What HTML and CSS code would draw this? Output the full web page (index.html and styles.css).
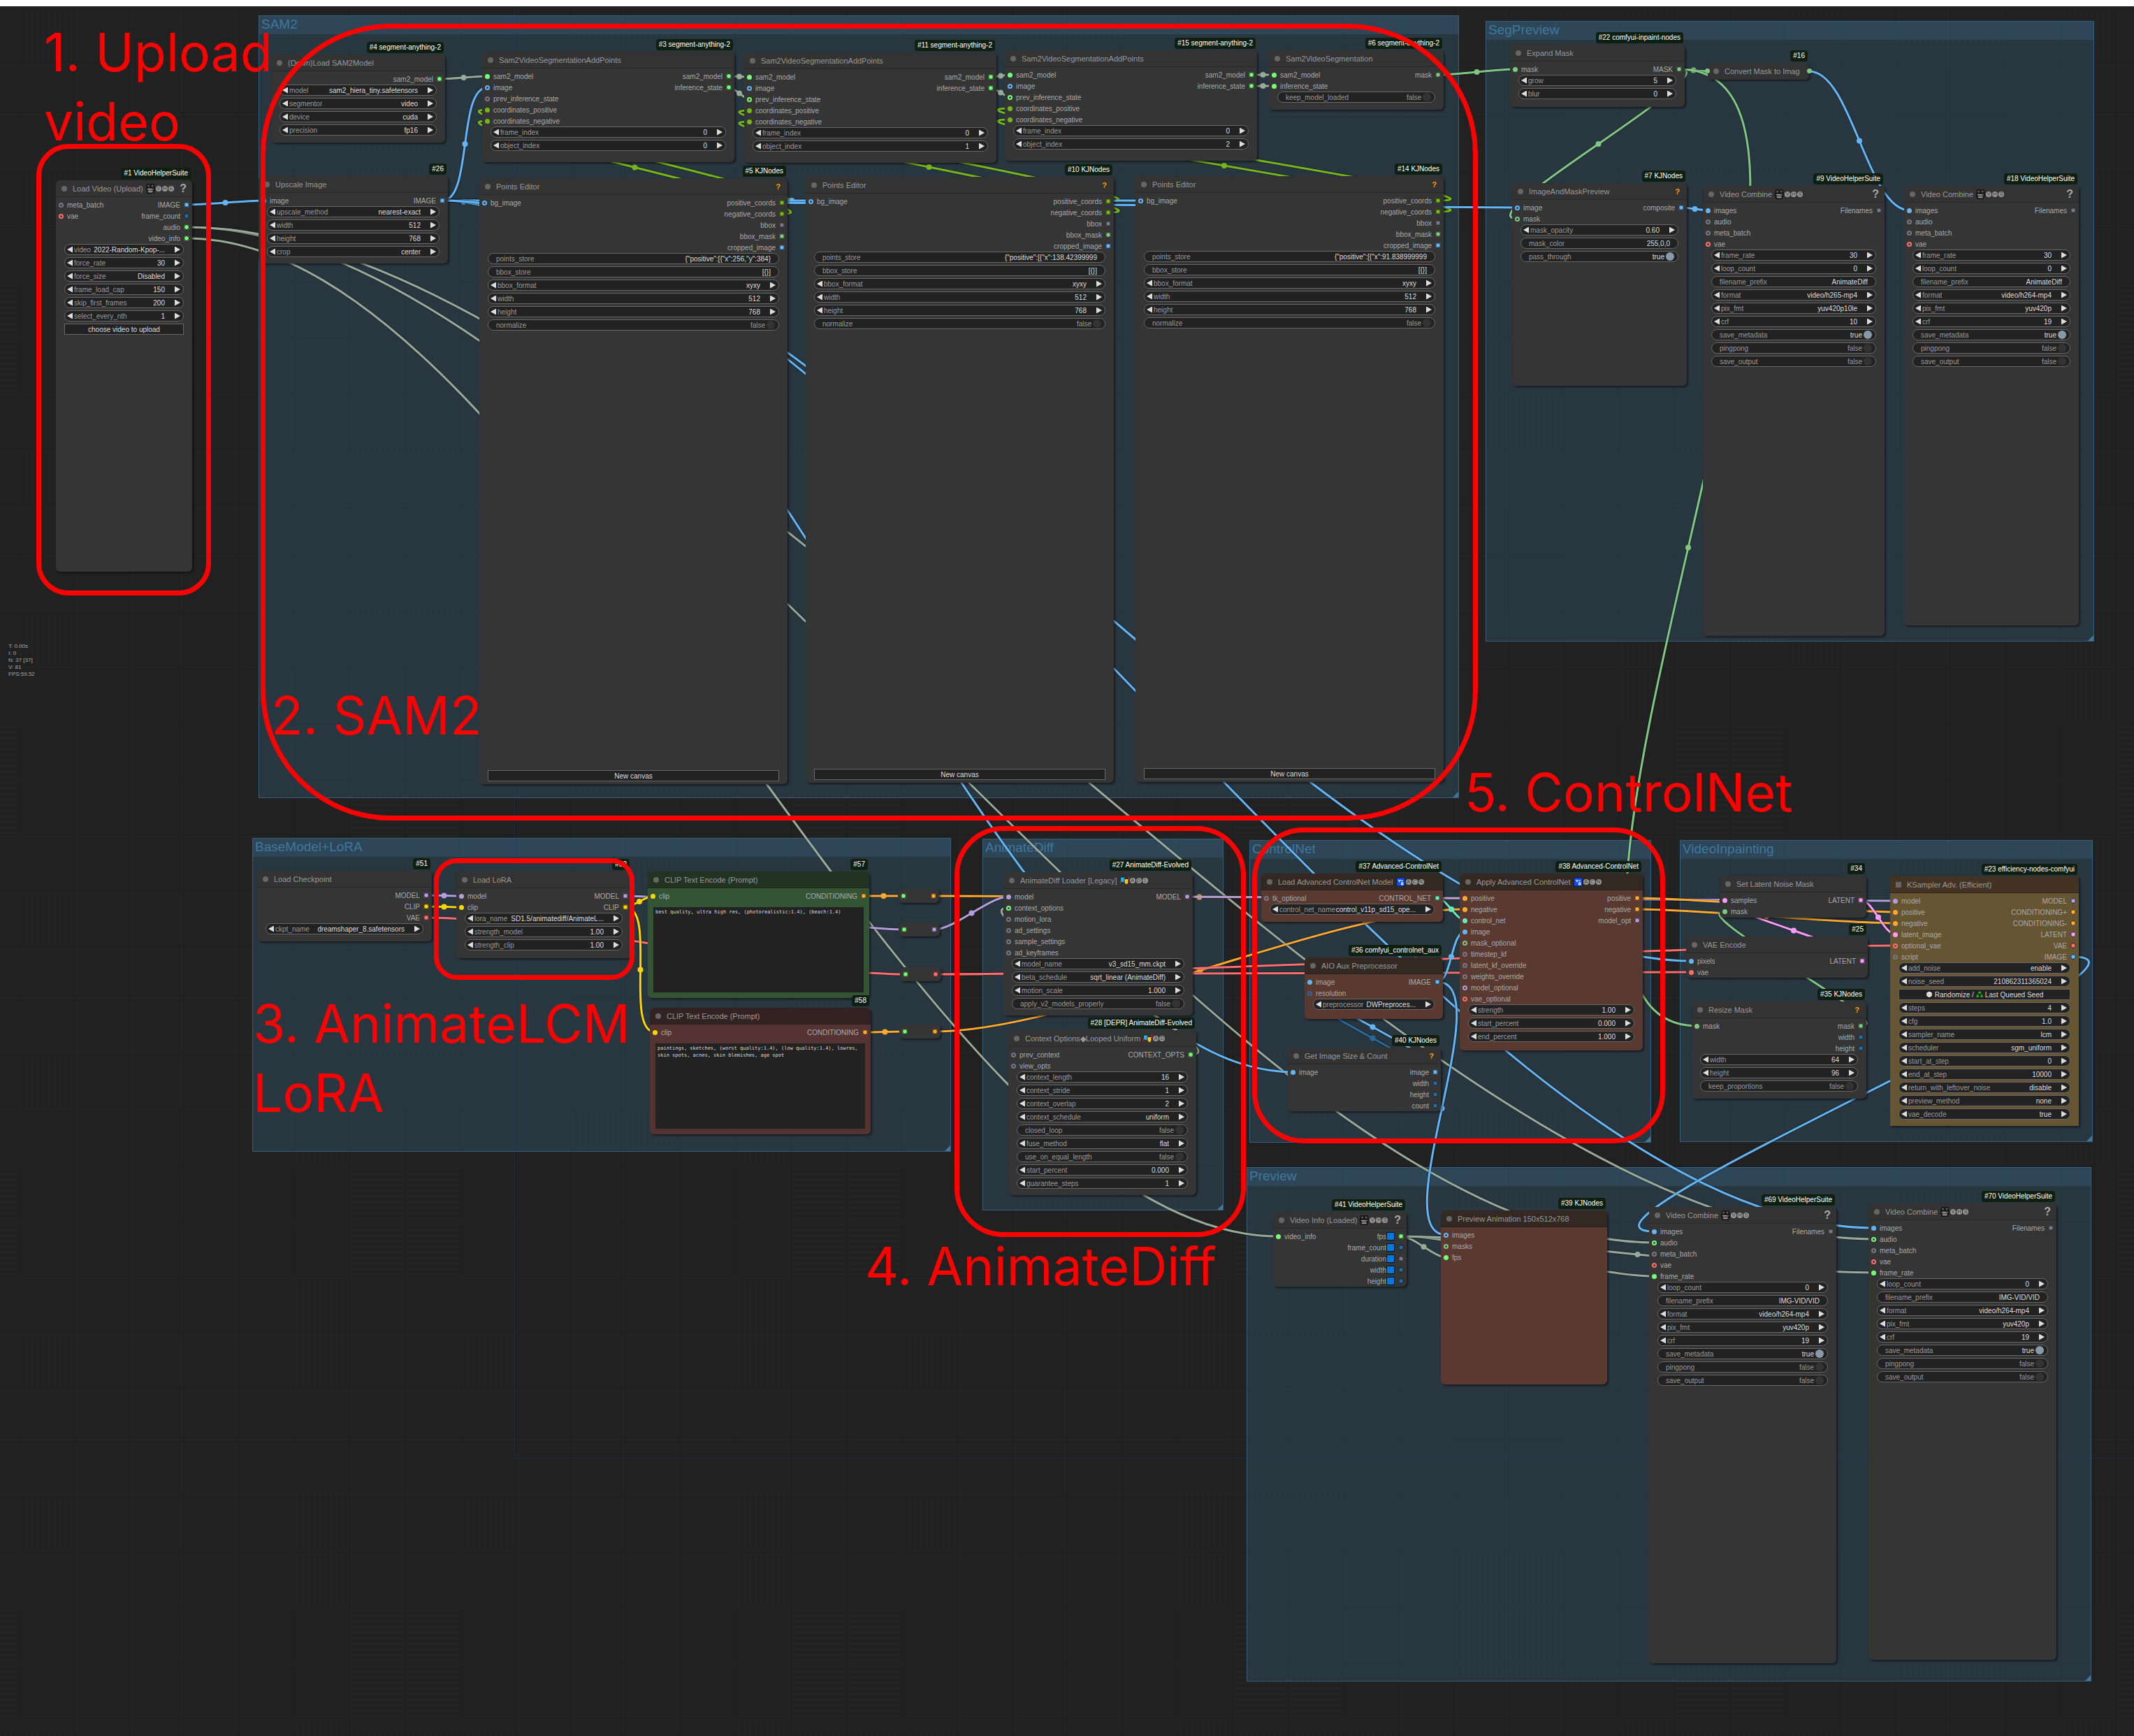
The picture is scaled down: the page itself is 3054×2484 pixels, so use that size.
FILE: index.html
```html
<!DOCTYPE html>
<html lang="en">
<head>
<meta charset="utf-8">
<meta name="viewport" content="width=device-width, initial-scale=1">
<title>SAM2 video inpainting workflow</title>
<link rel="stylesheet" href="styles.css">
</head>
<body>
<svg class="sprites" aria-hidden="true">
  <symbol id="icon-camera" viewBox="0 0 12 13">
    <circle cx="3.4" cy="2.800" r="2.300" fill="#555" stroke="#0c0c0c" stroke-width="1.200"/>
    <circle cx="8.400" cy="2.800" r="2.300" fill="#555" stroke="#0c0c0c" stroke-width="1.200"/>
    <path d="M.6 5.400h10.600v3.200h-1.400v3.800H1.800V8.600H.6z" fill="#5c5c5c" stroke="#0c0c0c" stroke-width="1.200"/>
    <path d="M2.500 7h5M2.800 10.500h5.500" stroke="#aaa" stroke-width="1"/>
    <circle cx="8.400" cy="8.600" r=".9" fill="#a33"/>
  </symbol>
  <symbol id="icon-masks" viewBox="0 0 13 12">
    <path d="M.5 1h6.500v4.500q0 3.500-3 3.500T.5 5.500z" fill="#1fb4ee" stroke="#111" stroke-width=".8"/>
    <path d="M6 3.500h6v4.500q0 3.500-3 3.500T6 8z" fill="#fbc02d" stroke="#111" stroke-width=".8"/>
    <path d="M.5 6v4M12.500 .5v4" stroke="#d22" stroke-width="1.200"/>
  </symbol>
  <symbol id="icon-passport" viewBox="0 0 12 12">
    <rect x=".5" y=".5" width="11" height="11" fill="#0a4fff" stroke="#0a1a55"/>
    <path d="M3 3l1.500 2.500L6 3M7 4.500h2M6.500 7h3M7 7v2.500h2V7" fill="none" stroke="#fff" stroke-width="1.100"/>
  </symbol>
  <symbol id="icon-dice" viewBox="0 0 12 12">
    <path d="M6 1l4.500 2v5.500L6 11 1.500 8.500V3z" fill="#f2f2f2"/>
    <path d="M1.500 3L6 5.200 10.500 3M6 5.200V11" fill="none" stroke="#aaa" stroke-width=".6"/>
    <circle cx="4" cy="7" r=".6" fill="#555"/><circle cx="8.200" cy="6.500" r=".6" fill="#555"/>
  </symbol>
  <symbol id="icon-recycle" viewBox="0 0 12 12">
    <path d="M4 4.500L6 1.500l2 3M9 6l1.500 3.500H7.500M5 9.500H1.500L3.200 6" fill="none" stroke="#16c60c" stroke-width="2"/>
  </symbol>
</svg>

<main class="canvas">
  <section class="group group-sam2"><h2>SAM2</h2></section>
  <section class="group group-segpreview"><h2>SegPreview</h2></section>
  <section class="group group-base"><h2>BaseModel+LoRA</h2></section>
  <section class="group group-animatediff"><h2>AnimateDiff</h2></section>
  <section class="group group-controlnet"><h2>ControlNet</h2></section>
  <section class="group group-inpainting"><h2>VideoInpainting</h2></section>
  <section class="group group-preview"><h2>Preview</h2></section>

  <svg class="links" id="links" aria-hidden="true"></svg>
  <div id="nodes"></div>

  <div class="stats">T: 0.00s<br>I: 0<br>N: 37 [37]<br>V: 81<br>FPS:59.52</div>

  <div class="mark mark-upload"></div>
  <div class="mark mark-sam2"></div>
  <div class="mark mark-lora"></div>
  <div class="mark mark-animatediff"></div>
  <div class="mark mark-controlnet"></div>
  <p class="note note-upload">1. Upload<br>video</p>
  <p class="note note-sam2">2. SAM2</p>
  <p class="note note-lora">3. AnimateLCM<br>LoRA</p>
  <p class="note note-animatediff">4. AnimateDiff</p>
  <p class="note note-controlnet">5. ControlNet</p>
</main>
<script src="workflow.js"></script>
</body>
</html>
```

FILE: styles.css
```css
* { box-sizing: border-box; }

body {
  margin: 0;
  background: #222;
  font-family: "Liberation Sans", Arial, sans-serif;
}

.sprites { position: absolute; width: 0; height: 0; }

.canvas {
  position: relative;
  min-height: 100vh;
  overflow: hidden;
  background:
    linear-gradient(#fff, #fff) 0 0 / 100% 9px no-repeat,
    linear-gradient(#1f2b44, #1f2b44) 736px 0 / 1px 2086px no-repeat,
    linear-gradient(#1f2b44, #1f2b44) 736px 2086px / 100% 1px no-repeat,
    linear-gradient(#1c1c1c 1px, transparent 1px) 0 9px / 79px 79px,
    linear-gradient(90deg, #1c1c1c 1px, transparent 1px) 26px 0 / 79px 79px,
    repeating-linear-gradient(#1f1f1f 0 1px, transparent 1px 8px) 0 9px / 79px 79px,
    repeating-linear-gradient(90deg, #1f1f1f 0 1px, transparent 1px 8px) 26px 0 / 79px 79px,
    #222;
}

/* Groups */
.group {
  position: absolute;
  background: rgba(63, 120, 158, .25);
  border: 1px solid rgba(63, 120, 158, .6);
}
.group::after {
  content: "";
  position: absolute;
  right: 0;
  bottom: 0;
  width: 8px;
  height: 8px;
  background: #3f789e;
  clip-path: polygon(100% 0, 100% 100%, 0 100%);
}
.group h2 {
  margin: 0;
  padding: 0 3px;
  height: 26px;
  background: rgba(63, 120, 158, .25);
  color: #3f789e;
  font-size: 19px;
  font-weight: 400;
  line-height: 24px;
}
.group-sam2 { left: 370px; top: 22px; width: 1718px; height: 1120px; }
.group-segpreview { left: 2126px; top: 30px; width: 871px; height: 888px; }
.group-base { left: 361px; top: 1199px; width: 1000px; height: 449px; }
.group-animatediff { left: 1406px; top: 1200px; width: 345px; height: 532px; }
.group-controlnet { left: 1788px; top: 1202px; width: 575px; height: 433px; }
.group-inpainting { left: 2404px; top: 1202px; width: 591px; height: 432px; }
.group-preview { left: 1784px; top: 1670px; width: 1209px; height: 736px; }

/* Links */
.links { position: absolute; inset: 0; width: 100%; height: 100%; }
.links path { fill: none; stroke-width: 3px; }
.links .shade { stroke: rgba(0, 0, 0, .3); stroke-width: 5px; }

/* Nodes */
.node {
  position: absolute;
  display: flex;
  flex-direction: column;
  background: #353535;
  border-radius: 6px;
  box-shadow: 2px 2px 3px rgba(0, 0, 0, .5);
  color: #aaa;
  font-size: 10px;
}
.badge {
  position: absolute;
  right: 2px;
  bottom: 100%;
  margin-bottom: 2px;
  padding: 0 4px;
  height: 16px;
  border-radius: 4px;
  background: #0f1f0f;
  color: #fff;
  font-size: 10px;
  line-height: 16px;
  white-space: nowrap;
}
.title {
  display: flex;
  align-items: center;
  gap: 4px;
  flex: none;
  height: 24px;
  padding: 0 8px;
  border-bottom: 1px solid rgba(0, 0, 0, .2);
  border-radius: 6px 6px 0 0;
  background: #333;
  color: #999;
}
.title::before {
  content: "";
  flex: none;
  width: 8px;
  height: 8px;
  margin-right: 4px;
  border-radius: 50%;
  background: #666;
}
.title h3 { margin: 0; font-size: 11px; font-weight: 400; line-height: 24px; white-space: nowrap; }
.tags { display: flex; align-items: center; }
.icon { width: 13px; height: 14px; }
.tag {
  width: 8px;
  height: 8px;
  margin-left: 1px;
  border-radius: 50%;
  background: #999;
  color: #333;
  font-size: 7px;
  line-height: 8px;
  text-align: center;
}
.help { margin-left: auto; padding: 0 2px; border: 0; background: none; color: #f90; font: bold 11px "Liberation Sans", Arial, sans-serif; }
.help-vhs { padding: 0; color: #aaa; font-size: 16px; }

.slots { display: flex; justify-content: space-between; padding-top: 3px; }
.slots ul { margin: 0; padding: 0; list-style: none; }
.slots li { display: flex; align-items: center; gap: 5px; height: 16px; padding: 0 4px; white-space: nowrap; }
.outputs li { flex-direction: row-reverse; }
.dot { flex: none; width: 7px; height: 7px; border-radius: 50%; background: var(--c); }
.outputs .dot, .reroute .dot { outline: 1px solid #111; outline-offset: -1px; width: 8px; height: 8px; }
.optional .dot { background: none; border: 2px solid var(--c); }
.swatch { width: 10px; height: 10px; margin-right: 2px; background: #0078d7; outline: 1px solid #111; }
.has-swatch li { gap: 4px; }
.has-swatch .name { margin-right: -3px; }

.widget {
  display: flex;
  align-items: center;
  flex: none;
  height: 16px;
  margin: 0 12px 3px;
  border: 1px solid #666;
  border-radius: 8px;
  background: #222;
  color: #999;
}
.widget label { white-space: nowrap; }
.widget input, .widget select {
  flex: 1;
  min-width: 0;
  width: 0;
  height: 14px;
  margin: 0;
  padding: 0;
  border: 0;
  outline: 0;
  appearance: none;
  background: none;
  color: #ddd;
  font: 10px "Liberation Sans", Arial, sans-serif;
  text-align: right;
  text-align-last: right;
}
.step { flex: none; width: 8px; height: 9px; padding: 0; border: 0; background: #ddd; }
.prev { margin: 0 2px 0 3px; clip-path: polygon(100% 0, 100% 100%, 0 50%); }
.next { margin: 0 4px 0 14px; clip-path: polygon(0 0, 100% 50%, 0 100%); }
.text, .toggle { padding: 0 11px; }
.toggle { padding-right: 5px; }
.widget .state { margin-left: auto; }
.widget input[type="checkbox"] { flex: none; width: 12px; height: 12px; margin-left: 2px; border-radius: 50%; background: #333; }
.widget input[type="checkbox"]:checked { background: #89a; }
.toggle:has(:checked) .state { color: #ddd; }
.action {
  display: flex;
  align-items: center;
  justify-content: center;
  gap: 3px;
  flex: none;
  height: 16px;
  margin: 0 12px 3px;
  padding: 0;
  border: 1px solid #666;
  background: #222;
  color: #ddd;
  font: 10px "Liberation Sans", Arial, sans-serif;
}
.action .icon { width: 10px; height: 10px; }
.action-bottom { margin-top: auto; margin-bottom: 4px; }
.prompt {
  flex: 1;
  margin: 8px;
  padding: 2px 3px;
  border: 0;
  resize: none;
  background: #222;
  color: #ddd;
  font: 7px/10px "DejaVu Sans Mono", monospace;
}

.green { background: #353; }
.green .title { background: #232; }
.red { background: #533; }
.red .title { background: #322; }
.brown { background: #593930; }
.brown .title { background: #332922; }
.gold { background: #653; border-radius: 0; }
.gold .title { background: #432; border-radius: 0; }
.gold .title::before { border-radius: 0; }

.reroute {
  position: absolute;
  display: flex;
  align-items: center;
  justify-content: space-between;
  width: 59px;
  height: 20px;
  padding: 0 4px;
  border-radius: 6px;
  background: #353535;
  box-shadow: 2px 2px 3px rgba(0, 0, 0, .5);
}
.collapsed .title { border: 0; border-radius: 6px; }
.collapsed .dot { position: absolute; top: 8px; left: -4px; }
.collapsed .dot:last-child { left: auto; right: -4px; }

.stats { position: absolute; left: 12px; top: 920px; color: #aaa; font-size: 8px; line-height: 10px; }

/* Annotations drawn over the graph */
.mark { position: absolute; border: 7px solid #f00; pointer-events: none; }
.mark-upload { left: 52px; top: 206px; width: 250px; height: 646px; border-radius: 46px; }
.mark-sam2 { left: 373px; top: 34px; width: 1742px; height: 1140px; border-radius: 186px; }
.mark-lora { left: 621px; top: 1228px; width: 287px; height: 174px; border-radius: 33px; }
.mark-animatediff { left: 1366px; top: 1182px; width: 417px; height: 588px; border-radius: 70px; }
.mark-controlnet { left: 1792px; top: 1184px; width: 591px; height: 452px; border-radius: 74px; }
.note {
  position: absolute;
  margin: 0;
  color: #f00;
  font: 75px/99px Inter, "Open Sans", sans-serif;
  white-space: nowrap;
}
.note-upload { left: 63px; top: 25px; }
.note-sam2 { left: 388px; top: 974px; }
.note-lora { left: 362px; top: 1415px; }
.note-animatediff { left: 1238px; top: 1762px; }
.note-controlnet { left: 2096px; top: 1084px; }
```

FILE: workflow.js
```js
const COLORS = {
  b: '#64b5f6', i: '#29699c', g: '#7f7', n: '#778', m: '#81c784', y: '#ffd500',
  p: '#b39ddb', v: '#ff6e6e', c: '#ffa931', l: '#ff9cf9', t: '#6ee7b7', k: '#77b51c', d: '#9a9'
};

// Slots: "name color", a trailing "?" marks an optional input.
// Widgets: "kind|label|value"; kinds: n number, s select, t text, b toggle, a action.
const ADD_POINTS_IN = prev => ['sam2_model g', 'image b?', `prev_inference_state ${prev}?`, 'coordinates_positive k', 'coordinates_negative k'];
const ADD_POINTS_OUT = ['sam2_model g', 'inference_state g'];
const POINTS_OUT = ['positive_coords k', 'negative_coords k', 'bbox n', 'bbox_mask m', 'cropped_image b'];
const pointsWidgets = store => [`t|points_store|${store}`, 't|bbox_store|[{}]', 's|bbox_format|xyxy', 'n|width|512', 'n|height|768', 'b|normalize|false', 'a|New canvas|bottom'];
const VHS = ['camera', 'VHS'];
const SAVE = ['b|save_metadata|true', 'b|pingpong|false', 'b|save_output|false'];

const NODES = [
  { id: 1, badge: 'VideoHelperSuite', title: 'Load Video (Upload)', tags: VHS, help: 'vhs', box: [80, 258, 195, 560],
    in: ['meta_batch n?', 'vae v?'], out: ['IMAGE b', 'frame_count i', 'audio g', 'video_info g'],
    widgets: ['s|video|2022-Random-Kpop-...', 'n|force_rate|30', 's|force_size|Disabled', 'n|frame_load_cap|150', 'n|skip_first_frames|200', 'n|select_every_nth|1', 'a|choose video to upload'] },
  { id: 4, badge: 'segment-anything-2', title: '(Down)Load SAM2Model', box: [388, 78, 249, 126],
    in: [], out: ['sam2_model g'],
    widgets: ['s|model|sam2_hiera_tiny.safetensors', 's|segmentor|video', 's|device|cuda', 's|precision|fp16'] },
  { id: 26, badge: '', title: 'Upscale Image', box: [370, 252, 271, 125],
    in: ['image b'], out: ['IMAGE b'],
    widgets: ['s|upscale_method|nearest-exact', 'n|width|512', 'n|height|768', 's|crop|center'] },
  { id: 3, badge: 'segment-anything-2', title: 'Sam2VideoSegmentationAddPoints', box: [690, 74, 361, 158],
    in: ADD_POINTS_IN('n'), out: ADD_POINTS_OUT, widgets: ['n|frame_index|0', 'n|object_index|0'] },
  { id: 11, badge: 'segment-anything-2', title: 'Sam2VideoSegmentationAddPoints', box: [1065, 75, 361, 158],
    in: ADD_POINTS_IN('g'), out: ADD_POINTS_OUT, widgets: ['n|frame_index|0', 'n|object_index|1'] },
  { id: 15, badge: 'segment-anything-2', title: 'Sam2VideoSegmentationAddPoints', box: [1438, 72, 361, 158],
    in: ADD_POINTS_IN('g'), out: ADD_POINTS_OUT, widgets: ['n|frame_index|0', 'n|object_index|2'] },
  { id: 6, badge: 'segment-anything-2', title: 'Sam2VideoSegmentation', box: [1816, 72, 250, 85],
    in: ['sam2_model g', 'inference_state g'], out: ['mask m'], widgets: ['b|keep_model_loaded|false'] },
  { id: 5, badge: 'KJNodes', title: 'Points Editor', help: 'kj', box: [686, 255, 441, 867],
    in: ['bg_image b?'], out: POINTS_OUT, widgets: pointsWidgets('{"positive":[{"x":256,"y":384}') },
  { id: 10, badge: 'KJNodes', title: 'Points Editor', help: 'kj', box: [1153, 253, 441, 867],
    in: ['bg_image b?'], out: POINTS_OUT, widgets: pointsWidgets('{"positive":[{"x":138.42399999') },
  { id: 14, badge: 'KJNodes', title: 'Points Editor', help: 'kj', box: [1625, 252, 441, 867],
    in: ['bg_image b?'], out: POINTS_OUT, widgets: pointsWidgets('{"positive":[{"x":91.838999999') },

  { id: 22, badge: 'comfyui-inpaint-nodes', title: 'Expand Mask', box: [2161, 64, 250, 89],
    in: ['mask m'], out: ['MASK m'], widgets: ['n|grow|5', 'n|blur|0'] },
  { id: 16, badge: '', title: 'Convert Mask to Imag', collapsed: true, box: [2444, 90, 145, 24], in: ['x m'], out: ['x m'], widgets: [] },
  { id: 7, badge: 'KJNodes', title: 'ImageAndMaskPreview', help: 'kj', box: [2164, 262, 250, 290],
    in: ['image b?', 'mask m?'], out: ['composite b'],
    widgets: ['n|mask_opacity|0.60', 't|mask_color|255,0,0', 'b|pass_through|true'] },
  { id: 9, badge: 'VideoHelperSuite', title: 'Video Combine', tags: VHS, help: 'vhs', box: [2437, 266, 260, 644],
    in: ['images b', 'audio n?', 'meta_batch n?', 'vae v?'], out: ['Filenames n'],
    widgets: ['n|frame_rate|30', 'n|loop_count|0', 't|filename_prefix|AnimateDiff', 's|format|video/h265-mp4', 's|pix_fmt|yuv420p10le', 'n|crf|10', ...SAVE] },
  { id: 18, badge: 'VideoHelperSuite', title: 'Video Combine', tags: VHS, help: 'vhs', box: [2725, 266, 250, 629],
    in: ['images b', 'audio n?', 'meta_batch n?', 'vae v?'], out: ['Filenames n'],
    widgets: ['n|frame_rate|30', 'n|loop_count|0', 't|filename_prefix|AnimateDiff', 's|format|video/h264-mp4', 's|pix_fmt|yuv420p', 'n|crf|19', ...SAVE] },

  { id: 51, badge: '', title: 'Load Checkpoint', box: [368, 1246, 250, 101],
    in: [], out: ['MODEL p', 'CLIP y', 'VAE v'], widgets: ['s|ckpt_name|dreamshaper_8.safetensors'] },
  { id: 52, badge: '', title: 'Load LoRA', box: [653, 1247, 250, 124],
    in: ['model p', 'clip y'], out: ['MODEL p', 'CLIP y'],
    widgets: ['s|lora_name|SD1.5/animatediff/AnimateL...', 'n|strength_model|1.00', 'n|strength_clip|1.00'] },
  { id: 57, badge: '', title: 'CLIP Text Encode (Prompt)', color: 'green', box: [927, 1247, 317, 181],
    in: ['clip y'], out: ['CONDITIONING c'], widgets: [],
    prompt: 'best quality, ultra high res, (photorealistic:1.4), (beach:1.4)' },
  { id: 58, badge: '', title: 'CLIP Text Encode (Prompt)', color: 'red', box: [930, 1442, 316, 181],
    in: ['clip y'], out: ['CONDITIONING c'], widgets: [],
    prompt: 'paintings, sketches, (worst quality:1.4), (low quality:1.4), lowres,\nskin spots, acnes, skin blemishes, age spot' },

  { id: 27, badge: 'AnimateDiff-Evolved', title: 'AnimateDiff Loader [Legacy]', tags: ['masks', 'AD1'], box: [1436, 1248, 271, 205],
    in: ['model p', 'context_options g?', 'motion_lora n?', 'ad_settings n?', 'sample_settings n?', 'ad_keyframes n?'], out: ['MODEL p'],
    widgets: ['s|model_name|v3_sd15_mm.ckpt', 's|beta_schedule|sqrt_linear (AnimateDiff)', 'n|motion_scale|1.000', 'b|apply_v2_models_properly|false'] },
  { id: 28, badge: '[DEPR] AnimateDiff-Evolved', title: 'Context Options◆Looped Uniform', tags: ['masks', 'AD'], box: [1443, 1474, 269, 236],
    in: ['prev_context n?', 'view_opts n?'], out: ['CONTEXT_OPTS g'],
    widgets: ['n|context_length|16', 'n|context_stride|1', 'n|context_overlap|2', 's|context_schedule|uniform', 'b|closed_loop|false', 's|fuse_method|flat', 'b|use_on_equal_length|false', 'n|start_percent|0.000', 'n|guarantee_steps|1'] },

  { id: 37, badge: 'Advanced-ControlNet', title: 'Load Advanced ControlNet Model', tags: ['passport', 'ACN'], color: 'brown', box: [1805, 1250, 260, 69],
    in: ['tk_optional n?'], out: ['CONTROL_NET t'], widgets: ['s|control_net_name|control_v11p_sd15_ope...'] },
  { id: 38, badge: 'Advanced-ControlNet', title: 'Apply Advanced ControlNet', tags: ['passport', 'ACN'], color: 'brown', box: [2089, 1250, 262, 253],
    in: ['positive c', 'negative c', 'control_net t', 'image b', 'mask_optional m?', 'timestep_kf n?', 'latent_kf_override n?', 'weights_override n?', 'model_optional p?', 'vae_optional v?'],
    out: ['positive c', 'negative c', 'model_opt p'],
    widgets: ['n|strength|1.00', 'n|start_percent|0.000', 'n|end_percent|1.000'] },
  { id: 36, badge: 'comfyui_controlnet_aux', title: 'AIO Aux Preprocessor', color: 'brown', box: [1867, 1370, 198, 88],
    in: ['image b', 'resolution i?'], out: ['IMAGE b'], widgets: ['s|preprocessor|DWPreproces...'] },
  { id: 40, badge: 'KJNodes', title: 'Get Image Size & Count', help: 'kj', box: [1843, 1499, 219, 91],
    in: ['image b'], out: ['image b', 'width i', 'height i', 'count i'], widgets: [] },

  { id: 34, badge: '', title: 'Set Latent Noise Mask', box: [2461, 1253, 210, 60],
    in: ['samples l', 'mask m'], out: ['LATENT l'], widgets: [] },
  { id: 25, badge: '', title: 'VAE Encode', box: [2413, 1340, 260, 59],
    in: ['pixels b', 'vae v'], out: ['LATENT l'], widgets: [] },
  { id: 35, badge: 'KJNodes', title: 'Resize Mask', help: 'kj', box: [2421, 1433, 250, 139],
    in: ['mask m'], out: ['mask m', 'width i', 'height i'],
    widgets: ['n|width|64', 'n|height|96', 'b|keep_proportions|false'] },
  { id: 23, badge: 'efficiency-nodes-comfyui', title: 'KSampler Adv. (Efficient)', color: 'gold', box: [2705, 1254, 270, 357],
    in: ['model p', 'positive c', 'negative c', 'latent_image l', 'optional_vae v?', 'script n?'],
    out: ['MODEL p', 'CONDITIONING+ c', 'CONDITIONING- c', 'LATENT l', 'VAE v', 'IMAGE b'],
    widgets: ['s|add_noise|enable', 'n|noise_seed|210862311365024', 'a|seed', 'n|steps|4', 'n|cfg|1.0', 's|sampler_name|lcm', 's|scheduler|sgm_uniform', 'n|start_at_step|0', 'n|end_at_step|10000', 's|return_with_leftover_noise|disable', 's|preview_method|none', 's|vae_decode|true'] },

  { id: 41, badge: 'VideoHelperSuite', title: 'Video Info (Loaded)', tags: VHS, help: 'vhs', swatch: true, box: [1822, 1734, 191, 107],
    in: ['video_info g'], out: ['fps g', 'frame_count i', 'duration n', 'width i', 'height i'], widgets: [] },
  { id: 39, badge: 'KJNodes', title: 'Preview Animation 150x512x768', color: 'brown', box: [2062, 1732, 238, 249],
    in: ['images b?', 'masks m?', 'fps g'], out: [], widgets: [] },
  { id: 69, badge: 'VideoHelperSuite', title: 'Video Combine', tags: VHS, help: 'vhs', box: [2360, 1727, 268, 653],
    in: ['images b', 'audio g?', 'meta_batch n?', 'vae v?', 'frame_rate g'], out: ['Filenames n'],
    widgets: ['n|loop_count|0', 't|filename_prefix|IMG-VID/VID', 's|format|video/h264-mp4', 's|pix_fmt|yuv420p', 'n|crf|19', ...SAVE] },
  { id: 70, badge: 'VideoHelperSuite', title: 'Video Combine', tags: VHS, help: 'vhs', box: [2674, 1722, 269, 653],
    in: ['images b', 'audio g?', 'meta_batch n?', 'vae v?', 'frame_rate g'], out: ['Filenames n'],
    widgets: ['n|loop_count|0', 't|filename_prefix|IMG-VID/VID', 's|format|video/h264-mp4', 's|pix_fmt|yuv420p', 'n|crf|19', ...SAVE] }
];

const REROUTES = { r1: [1285, 1272, 'c'], r2: [1286, 1320, 'p'], r3: [1288, 1384, 'v'], r4: [1287, 1466, 'c'] };

// [from node, output index, to node, input index, color]
const LINKS = [
  [4, 0, 3, 0, 'd'], [3, 0, 11, 0, 'd'], [3, 1, 11, 2, 'd'], [11, 0, 15, 0, 'd'], [11, 1, 15, 2, 'd'],
  [15, 0, 6, 0, 'd'], [15, 1, 6, 1, 'd'], [5, 0, 3, 3, 'k'], [5, 1, 3, 4, 'k'], [10, 0, 11, 3, 'k'],
  [10, 1, 11, 4, 'k'], [14, 0, 15, 3, 'k'], [14, 1, 15, 4, 'k'],
  [1, 2, 69, 1, 'd'], [1, 2, 70, 1, 'd'], [1, 3, 41, 0, 'd'], [1, 0, 26, 0, 'b'],
  [26, 0, 3, 1, 'b'], [26, 0, 5, 0, 'b'], [26, 0, 10, 0, 'b'], [26, 0, 14, 0, 'b'], [26, 0, 7, 0, 'b'],
  [26, 0, 40, 0, 'b'], [26, 0, 25, 0, 'b'], [26, 0, 70, 0, 'b'],
  [6, 0, 22, 0, 'm'], [22, 0, 16, 0, 'm'], [22, 0, 7, 1, 'm'], [22, 0, 35, 0, 'm'], [16, 0, 18, 0, 'b'], [7, 0, 9, 0, 'b'],
  [51, 0, 52, 0, 'p'], [51, 1, 52, 1, 'y'], [51, 2, 'r3', 0, 'v'], [52, 0, 'r2', 0, 'p'], [52, 1, 57, 0, 'y'], [52, 1, 58, 0, 'y'],
  [57, 0, 'r1', 0, 'c'], [58, 0, 'r4', 0, 'c'], ['r1', 0, 38, 0, 'c'], ['r4', 0, 38, 1, 'c'], ['r2', 0, 27, 0, 'p'],
  ['r3', 0, 25, 1, 'v'], ['r3', 0, 23, 4, 'v'], [28, 0, 27, 1, 'd'], [27, 0, 23, 0, 'p'],
  [37, 0, 38, 2, 't'], [36, 0, 38, 3, 'b'], [36, 0, 39, 0, 'b'], [40, 0, 36, 0, 'b'], [40, 1, 36, 1, 'i'],
  [38, 0, 23, 1, 'c'], [38, 1, 23, 2, 'c'], [25, 0, 34, 0, 'l'], [34, 0, 23, 3, 'l'], [35, 0, 34, 1, 'm'],
  [41, 0, 39, 2, 'd'], [41, 0, 69, 4, 'd'], [41, 0, 70, 4, 'd'], [23, 5, 69, 0, 'b']
];

const esc = s => s.replace(/&/g, '&amp;').replace(/</g, '&lt;').replace(/"/g, '&quot;');
const icon = name => `<svg class="icon" aria-hidden="true"><use href="#icon-${name}"/></svg>`;
const dot = c => `<span class="dot" style="--c:${COLORS[c]}"></span>`;
const place = ([x, y, w, h]) => `left:${x}px;top:${y}px` + (w ? `;width:${w}px;height:${h}px` : '');

function slot(spec, swatch) {
  const [name, type] = spec.split(' ');
  const box = swatch ? '<span class="swatch"></span>' : '';
  return `<li class="${type.endsWith('?') ? 'optional' : ''}">${dot(type[0])}${box}<span class="name">${name}</span></li>`;
}

function widget(spec, node, i) {
  const [kind, name, value] = spec.split('|');
  const id = `w${node.id}-${i}`;
  const label = `<label for="${id}">${name}</label>`;
  if (kind === 'a') {
    const text = name === 'seed' ? `${icon('dice')}Randomize / ${icon('recycle')}Last Queued Seed` : name;
    return `<button type="button" class="action ${value ? 'action-bottom' : ''}">${text}</button>`;
  }
  if (kind === 'b') {
    return `<div class="widget toggle">${label}<span class="state">${value}</span><input type="checkbox" id="${id}" ${value === 'true' ? 'checked' : ''}></div>`;
  }
  if (kind === 't') {
    return `<div class="widget text">${label}<input type="text" id="${id}" value="${esc(value)}"></div>`;
  }
  const field = kind === 's'
    ? `<select id="${id}"><option>${value}</option></select>`
    : `<input type="text" inputmode="numeric" id="${id}" value="${value}">`;
  return `<div class="widget"><button type="button" class="step prev" aria-label="Previous ${name}"></button>${label}${field}<button type="button" class="step next" aria-label="Next ${name}"></button></div>`;
}

function renderNode(n) {
  const tags = n.tags ? `<span class="tags">${icon(n.tags[0])}${[...n.tags[1]].map(t => `<span class="tag">${t}</span>`).join('')}</span>` : '';
  const help = n.help ? `<button type="button" class="help help-${n.help}">?</button>` : '';
  const head = `<span class="badge">#${n.id}${n.badge ? ' ' + n.badge : ''}</span><header class="title"><h3>${esc(n.title)}</h3>${tags}${help}</header>`;
  if (n.collapsed) {
    return `<article class="node collapsed" style="${place(n.box)}">${head}${dot('m')}${dot('m')}</article>`;
  }
  return `<article class="node ${n.color || ''}" style="${place(n.box)}">${head}
    <div class="slots"><ul class="inputs">${n.in.map(s => slot(s)).join('')}</ul>
    <ul class="outputs ${n.swatch ? 'has-swatch' : ''}">${n.out.map(s => slot(s, n.swatch)).join('')}</ul></div>
    ${n.widgets.map((w, i) => widget(w, n, i)).join('')}
    ${n.prompt ? `<textarea class="prompt" aria-label="Prompt ${n.id}" spellcheck="false">${n.prompt}</textarea>` : ''}</article>`;
}

function slotPoint(id, index, output) {
  if (REROUTES[id]) {
    const [x, y] = REROUTES[id];
    return [output ? x + 51 : x + 8, y + 10];
  }
  const node = NODES.find(n => n.id === id);
  const [x, y, w] = node.box;
  if (node.collapsed) return [output ? x + w : x, y + 12];
  return [output ? x + w - 8 : x + 8, y + 35 + 16 * index];
}

function renderLink([from, out, to, input, color]) {
  const [x1, y1] = slotPoint(from, out, true);
  const [x2, y2] = slotPoint(to, input, false);
  const bend = Math.hypot(x2 - x1, y2 - y1) / 4;
  const d = `M${x1} ${y1}C${x1 + bend} ${y1} ${x2 - bend} ${y2} ${x2} ${y2}`;
  return `<path class="shade" d="${d}"/><path d="${d}" stroke="${COLORS[color]}"/>
    <circle cx="${(x1 + x2) / 2}" cy="${(y1 + y2) / 2}" r="4" fill="${COLORS[color]}"/>`;
}

document.getElementById('links').innerHTML = LINKS.map(renderLink).join('');
document.getElementById('nodes').innerHTML =
  Object.values(REROUTES).map(([x, y, c]) => `<div class="reroute" style="${place([x, y])}">${dot('g')}${dot(c)}</div>`).join('') +
  NODES.map(renderNode).join('');
```
